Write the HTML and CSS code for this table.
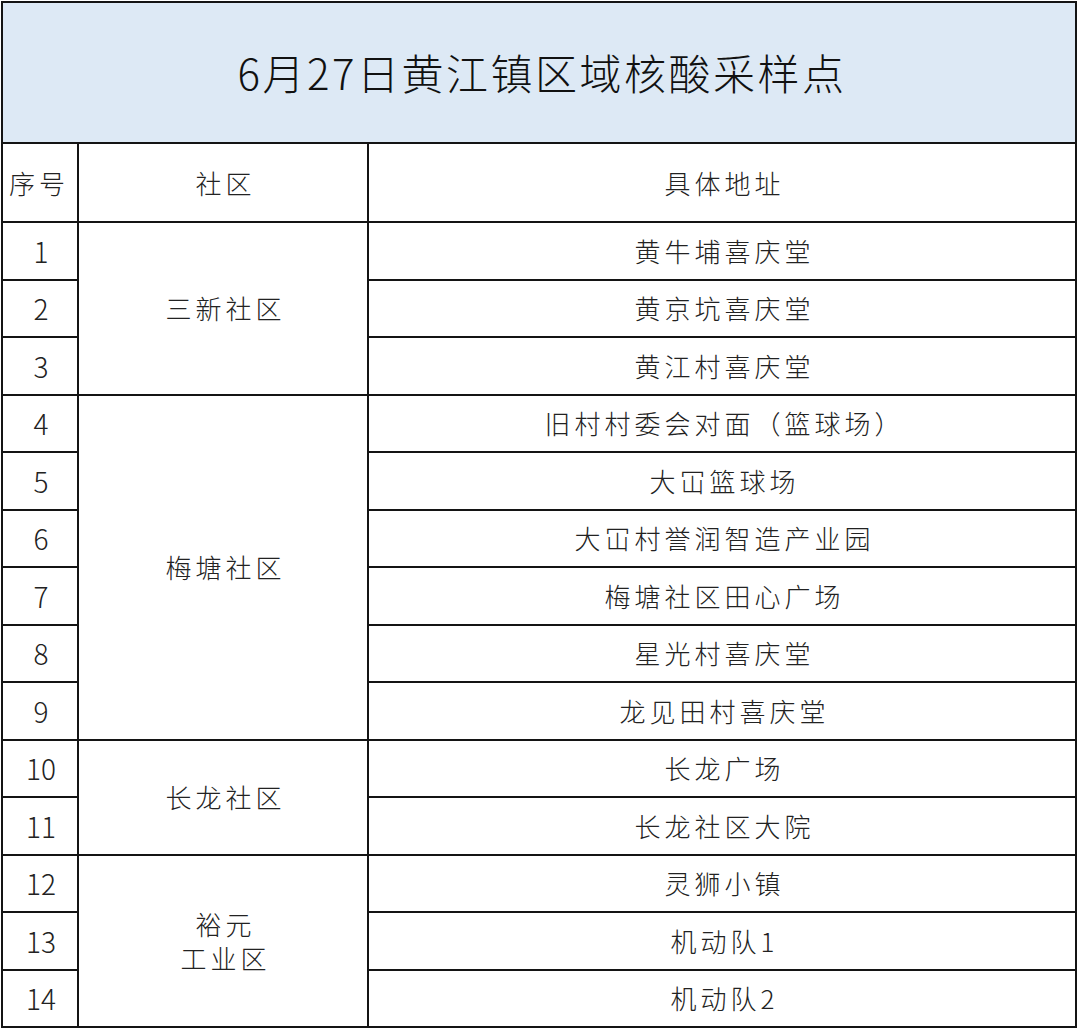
FILE: index.html
```html
<!DOCTYPE html>
<html lang="zh-CN">
<head>
<meta charset="utf-8">
<title>6月27日黄江镇区域核酸采样点</title>
<link rel="stylesheet" href="styles.css">
</head>
<body>
<div class="sheet">
  <div class="cell title">6月27日黄江镇区域核酸采样点</div>

  <div class="cell head head-num">序号</div>
  <div class="cell head">社区</div>
  <div class="cell head">具体地址</div>

  <div class="cell num">1</div>
  <div class="cell comm span3">三新社区</div>
  <div class="cell addr">黄牛埔喜庆堂</div>
  <div class="cell num">2</div>
  <div class="cell addr">黄京坑喜庆堂</div>
  <div class="cell num">3</div>
  <div class="cell addr">黄江村喜庆堂</div>

  <div class="cell num">4</div>
  <div class="cell comm span6">梅塘社区</div>
  <div class="cell addr">旧村村委会对面（篮球场）</div>
  <div class="cell num">5</div>
  <div class="cell addr">大冚篮球场</div>
  <div class="cell num">6</div>
  <div class="cell addr">大冚村誉润智造产业园</div>
  <div class="cell num">7</div>
  <div class="cell addr">梅塘社区田心广场</div>
  <div class="cell num">8</div>
  <div class="cell addr">星光村喜庆堂</div>
  <div class="cell num">9</div>
  <div class="cell addr">龙见田村喜庆堂</div>

  <div class="cell num">10</div>
  <div class="cell comm span2">长龙社区</div>
  <div class="cell addr">长龙广场</div>
  <div class="cell num">11</div>
  <div class="cell addr">长龙社区大院</div>

  <div class="cell num">12</div>
  <div class="cell comm span3 twoline">裕元<br>工业区</div>
  <div class="cell addr">灵狮小镇</div>
  <div class="cell num">13</div>
  <div class="cell addr">机动队1</div>
  <div class="cell num">14</div>
  <div class="cell addr">机动队2</div>
</div>
</body>
</html>
```
FILE: styles.css
```css
html, body {
  margin: 0;
  padding: 0;
  background: #ffffff;
}

body {
  font-family: "Noto Sans CJK SC", "Noto Sans", sans-serif;
  color: #222222;
}

.sheet {
  margin: 1px 0 0 1px;
  width: 1076px;
  box-sizing: border-box;
  background: #141414;
  padding: 2px;
  display: grid;
  gap: 2px;
  grid-template-columns: 74px 288px 706px;
  grid-template-rows: 139px 77px repeat(14, 55.5px);
}

.cell {
  background: #ffffff;
  display: flex;
  align-items: center;
  justify-content: center;
  text-align: center;
  font-weight: 300;
  font-size: 26px;
  letter-spacing: 4px;
  line-height: 1;
  white-space: nowrap;
  padding-left: 5px;
}

.title {
  grid-column: 1 / -1;
  background: #dde9f5;
  font-size: 42px;
  letter-spacing: 2.5px;
  color: #111111;
  padding-left: 6px;
  padding-bottom: 2px;
}

.head {
  font-size: 26px;
}

.head-num {
  padding-left: 0;
  padding-right: 2px;
}

.num {
  font-size: 28px;
  letter-spacing: 0;
  padding-left: 2px;
}

.comm {
  grid-column: 2;
}

.span2 { grid-row: span 2; }
.span3 { grid-row: span 3; }
.span6 { grid-row: span 6; }

.twoline {
  line-height: 34px;
}
```
